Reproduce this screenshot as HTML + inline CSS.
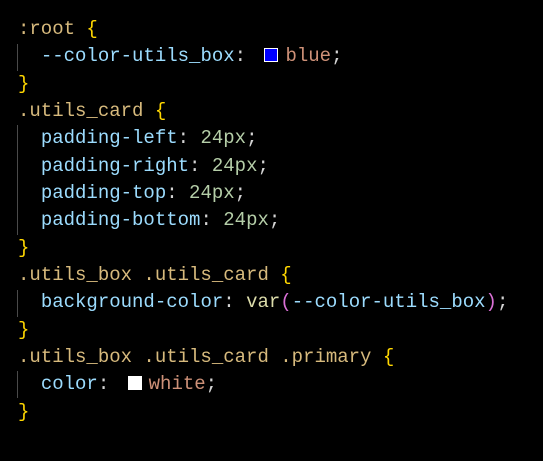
<!DOCTYPE html>
<html><head><meta charset="utf-8"><style>
html,body{margin:0;background:#000;width:543px;height:461px;overflow:hidden}
pre{margin:0;position:absolute;left:18px;top:16px;font-family:"Liberation Mono",monospace;font-size:19px;line-height:27.35px;color:#d4d4d4}
.s{color:#d7ba7d}.b{color:#ffd700}.p{color:#9cdcfe}.n{color:#b5cea8}.v{color:#ce9178}.f{color:#dcdcaa}.q{color:#da70d6}
.sw{display:inline-block;width:14px;height:14px;box-sizing:border-box;border:1px solid #fff;margin:0 7px 0 7px;vertical-align:-1px}
.g{position:absolute;left:17px;width:1px;background:#4a4a4a}
</style></head><body>
<div class="g" style="top:44px;height:27px"></div>
<div class="g" style="top:125px;height:110px"></div>
<div class="g" style="top:290px;height:27px"></div>
<div class="g" style="top:371px;height:27px"></div>
<pre><span class="s">:root</span> <span class="b">{</span>
  <span class="p">--color-utils_box</span>: <span class="sw" style="background:#00f"></span><span class="v">blue</span>;
<span class="b">}</span>
<span class="s">.utils_card</span> <span class="b">{</span>
  <span class="p">padding-left</span>: <span class="n">24px</span>;
  <span class="p">padding-right</span>: <span class="n">24px</span>;
  <span class="p">padding-top</span>: <span class="n">24px</span>;
  <span class="p">padding-bottom</span>: <span class="n">24px</span>;
<span class="b">}</span>
<span class="s">.utils_box .utils_card</span> <span class="b">{</span>
  <span class="p">background-color</span>: <span class="f">var</span><span class="q">(</span><span class="p">--color-utils_box</span><span class="q">)</span>;
<span class="b">}</span>
<span class="s">.utils_box .utils_card .primary</span> <span class="b">{</span>
  <span class="p">color</span>: <span class="sw" style="background:#fff"></span><span class="v">white</span>;
<span class="b">}</span></pre>
</body></html>
